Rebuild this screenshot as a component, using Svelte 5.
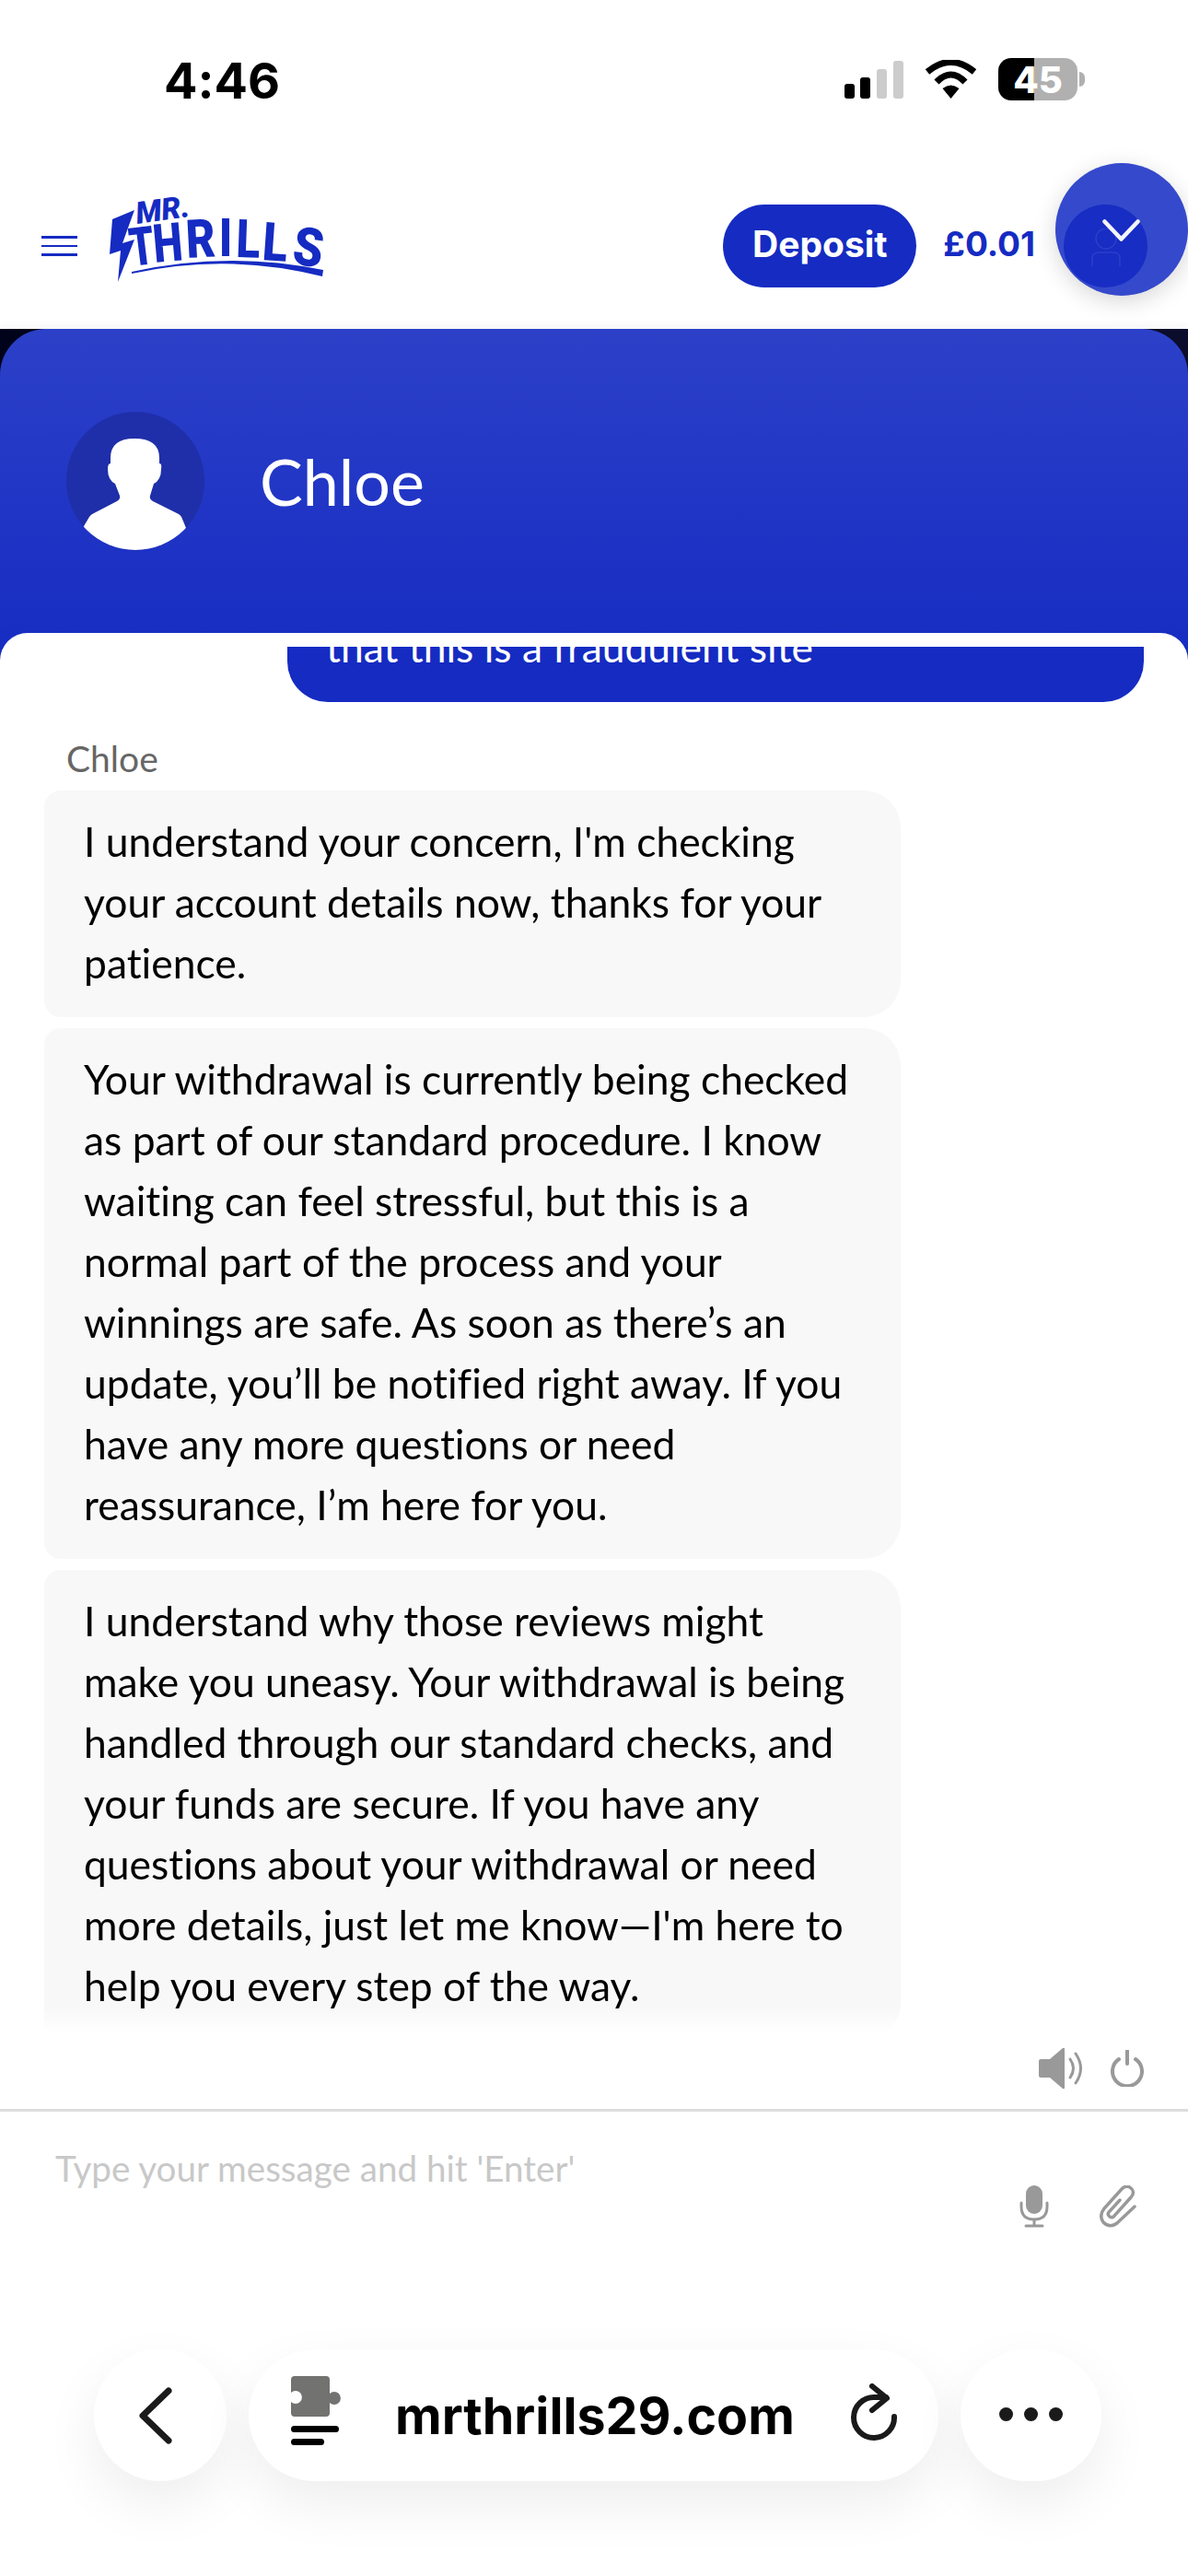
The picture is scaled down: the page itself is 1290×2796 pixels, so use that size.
<script>
  const thrills = [
    { c: 'T', x: 143, y: 289, r: -7, s: 0.74 },
    { c: 'H', x: 168, y: 285, r: -5, s: 0.78 },
    { c: 'R', x: 203, y: 280, r: -3, s: 0.84 },
    { c: 'I', x: 238, y: 278, r: 0, s: 0.8 },
    { c: 'L', x: 256, y: 279, r: 2, s: 0.82 },
    { c: 'L', x: 284, y: 282, r: 4, s: 0.86 },
    { c: 'S', x: 316, y: 286, r: 8, s: 0.9 }
  ];
  const first = [
    "I understand your concern, I'm checking",
    'your account details now, thanks for your',
    'patience.'
  ];
  const second = [
    'Your withdrawal is currently being checked',
    'as part of our standard procedure. I know',
    'waiting can feel stressful, but this is a',
    'normal part of the process and your',
    'winnings are safe. As soon as there’s an',
    'update, you’ll be notified right away. If you',
    'have any more questions or need',
    'reassurance, I’m here for you.'
  ];
  const third = [
    'I understand why those reviews might',
    'make you uneasy. Your withdrawal is being',
    'handled through our standard checks, and',
    'your funds are secure. If you have any',
    'questions about your withdrawal or need',
    "more details, just let me know—I'm here to",
    'help you every step of the way.'
  ];
</script>

<div class="page">
  <div class="status">
    <span class="time">4:46</span>
    <div class="status-icons">
      <svg class="signal" width="64" height="41" viewBox="0 0 64 41">
        <rect x="0" y="25" width="11" height="16" rx="3" fill="#000" />
        <rect x="17" y="18" width="11" height="23" rx="3" fill="#000" />
        <rect x="35" y="9" width="11" height="32" rx="3" fill="#ccc" />
        <rect x="53" y="0" width="11" height="41" rx="3" fill="#ccc" />
      </svg>
      <svg class="wifi" width="57" height="42" viewBox="0 0 57 42">
        <path d="M28.5 42 L19.5 31 Q28.5 24 37.5 31 Z" fill="#000" />
        <path d="M13 24 Q28.5 8 44 24" fill="none" stroke="#000" stroke-width="7" />
        <path d="M3 13 Q28.5 -8 54 13" fill="none" stroke="#000" stroke-width="7" />
      </svg>
      <div class="battery">
        <div class="cell"><span>45</span></div>
        <i class="tip"></i>
      </div>
    </div>
  </div>

  <header class="nav">
    <div class="burger"><i></i><i></i><i></i></div>
    <svg class="logo" width="240" height="130" viewBox="115 202 240 130">
      <path d="M146 228 L122 238 L119 276 L131 272 L128 306 L146 260 L133 264 Z" fill="#152bc2" />
      <text class="mr" transform="translate(149 243) rotate(-8)">MR.</text>
      {#each thrills as l}
        <text class="thrill" transform="translate({l.x} {l.y}) rotate({l.r}) scale({l.s} 1)">{l.c}</text>
      {/each}
      <path d="M143 295 Q247 272 351 293 L350 300 Q247 274 143 297 Z" fill="#152bc2" />
    </svg>
    <div class="spacer"></div>
    <button class="deposit"><span>Deposit</span></button>
    <span class="balance">£0.01</span>
    <div class="fab"></div>
    <div class="user-dot">
      <svg width="32" height="42" viewBox="0 0 32 42">
        <ellipse cx="16" cy="11" rx="11" ry="11" fill="none" stroke="#2b3fca" stroke-width="1.5" />
        <path d="M1 41 V33 Q1 26 8 26 H24 Q31 26 31 33 V41" fill="none" stroke="#2b3fca" stroke-width="1.5" />
      </svg>
    </div>
    <svg class="chev" width="41" height="24" viewBox="0 0 41 24">
      <path d="M2.5 2.5 L20.5 21.5 L38.5 2.5" fill="none" stroke="#f4f5fc" stroke-width="4.5" stroke-linecap="round" stroke-linejoin="round" />
    </svg>
  </header>

  <main class="widget">
    <div class="head">
      <div class="avatar">
        <svg width="150" height="150" viewBox="0 0 150 150">
          <path d="M18.5 125 L25 114 Q27 111 30 110 L55 97 Q59 95 58 91 L53 78 Q45 74 45 62 Q45 56 48 56 L48 50 Q48 29 74 29 Q101 29 101 50 L101 56 Q104 56 103 62 Q103 74 95 78 L91 91 Q90 95 94 97 L120 110 Q123 111 125 114 L130 126 L130 150 L18 150 Z" fill="#fff" />
        </svg>
      </div>
      <span class="name">Chloe</span>
    </div>
    <div class="panel">
      <div class="clip">
        <div class="out"><p>that this is a fraudulent site</p></div>
      </div>
      <div class="label">Chloe</div>
      <div class="bubbles">
        <div class="bubble">{#each first as t}<p>{t}</p>{/each}</div>
        <div class="bubble">{#each second as t}<p>{t}</p>{/each}</div>
        <div class="bubble">{#each third as t}<p>{t}</p>{/each}</div>
      </div>
      <div class="tools">
        <svg width="50" height="46" viewBox="0 0 50 46">
          <path d="M0 15 Q0 13 2 13 H12 L26 1 Q28 0 28 2 V44 Q28 46 26 45 L12 33 H2 Q0 33 0 31 Z" fill="#999" />
          <path d="M34 13 Q41 23 34 33" fill="none" stroke="#999" stroke-width="3" stroke-linecap="round" />
          <path d="M40 7 Q51 23 40 39" fill="none" stroke="#999" stroke-width="3" stroke-linecap="round" />
        </svg>
        <svg width="36" height="40" viewBox="0 0 36 40">
          <path d="M9 10 A16 16 0 1 0 27 10" fill="none" stroke="#999" stroke-width="4" stroke-linecap="round" />
          <path d="M18 1 V15" fill="none" stroke="#999" stroke-width="4" stroke-linecap="round" />
        </svg>
      </div>
      <div class="composer">
        <span class="ph">Type your message and hit 'Enter'</span>
        <div class="composer-icons">
          <svg width="32" height="46" viewBox="0 0 32 46">
            <rect x="7" y="0" width="18" height="31" rx="9" fill="#999" />
            <path d="M2 19 V23 Q2 37 16 37 Q30 37 30 23 V19" fill="none" stroke="#999" stroke-width="3" stroke-linecap="round" />
            <path d="M16 37 V44 M7 44 H25" fill="none" stroke="#999" stroke-width="3" stroke-linecap="round" />
          </svg>
          <svg width="40" height="46" viewBox="0 0 40 46">
            <path d="M22 16 L10 29 Q8 32 11 34 Q14 36 16 33 L34 13 Q39 7 34 3 Q29 -1 24 4 L5 25 Q-1 33 4 40 Q11 47 19 41 L38 23" fill="none" stroke="#999" stroke-width="3.5" stroke-linecap="round" />
          </svg>
        </div>
      </div>
    </div>
  </main>

  <footer class="browser">
    <div class="round back">
      <svg width="38" height="64" viewBox="0 0 38 64">
        <path d="M33 5 L5 32 L33 59" fill="none" stroke="#1a1a1a" stroke-width="7" stroke-linecap="round" stroke-linejoin="round" />
      </svg>
    </div>
    <div class="url">
      <svg class="ext" width="54" height="75" viewBox="0 0 54 75">
        <path d="M4 0 H38 Q42 0 42 4 V19 A7 7 0 1 1 42 29 V40 Q42 44 38 44 H4 Q0 44 0 40 V28 A7 7 0 1 0 0 18 V4 Q0 0 4 0 Z" fill="#727270" />
        <rect x="0" y="54" width="52" height="7" rx="3.5" fill="#000" />
        <rect x="0" y="68" width="36" height="7" rx="3.5" fill="#000" />
      </svg>
      <span class="host">mrthrills29.com</span>
      <svg class="reload" width="52" height="62" viewBox="0 0 52 62">
        <path d="M47 36 A22 22 0 1 1 26 15 L38 15" fill="none" stroke="#1a1a1a" stroke-width="6" stroke-linecap="round" />
        <path d="M23 3 L39 16 L23 29" fill="none" stroke="#1a1a1a" stroke-width="6" stroke-linecap="round" stroke-linejoin="round" />
      </svg>
    </div>
    <div class="round more">
      <div class="dots"><i></i><i></i><i></i></div>
    </div>
  </footer>
</div>

<style>
  :global(body) {
    margin: 0;
    background: #fff;
  }
  .page {
    position: relative;
    width: 1290px;
    height: 2796px;
    overflow: hidden;
    background: #fff;
    display: flex;
    flex-direction: column;
    font-family: 'Lato', sans-serif;
    font-variant-ligatures: none;
  }
  .status {
    height: 177px;
    flex: none;
    display: flex;
    align-items: flex-start;
    justify-content: space-between;
    box-sizing: border-box;
    padding: 56px 112px 0 178px;
  }
  .time {
    font-family: 'Inter', 'Liberation Sans', sans-serif;
    font-weight: 700;
    font-size: 54px;
    line-height: 64px;
    color: #000;
  }
  .status-icons {
    display: flex;
    align-items: flex-start;
    gap: 23px;
    padding-top: 7px;
  }
  .signal {
    margin-top: 3px;
  }
  .wifi {
    margin-top: 2px;
  }
  .battery {
    display: flex;
    align-items: center;
  }
  .cell {
    width: 86px;
    height: 46px;
    border-radius: 14px;
    background: linear-gradient(90deg, #000 45%, #b0b0b0 45%);
    display: flex;
    align-items: center;
    justify-content: center;
    color: #fff;
    font-family: 'Inter', 'Liberation Sans', sans-serif;
    font-weight: 800;
    font-size: 40px;
  }
  .tip {
    width: 6px;
    height: 16px;
    margin-left: 2px;
    border-radius: 0 6px 6px 0;
    background: #b0b0b0;
  }
  .nav {
    position: relative;
    height: 180px;
    flex: none;
    display: flex;
    align-items: center;
    box-sizing: border-box;
    padding-left: 45px;
  }
  .burger {
    display: flex;
    flex-direction: column;
    gap: 7px;
    width: 39px;
  }
  .burger i {
    display: block;
    height: 2.5px;
    background: #152bc2;
  }
  .logo {
    margin-left: 31px;
    flex: none;
  }
  .mr {
    font-family: 'Roboto', sans-serif;
    font-weight: 900;
    font-style: italic;
    font-size: 33px;
    fill: #152bc2;
  }
  .thrill {
    font-family: 'Roboto', sans-serif;
    font-weight: 900;
    font-size: 58px;
    fill: #152bc2;
  }
  .spacer {
    flex: 1;
  }
  .deposit {
    width: 210px;
    height: 90px;
    border: 0;
    padding: 0 0 6px;
    border-radius: 45px;
    background: #152bc2;
    color: #fff;
    font-family: 'Inter', sans-serif;
    font-weight: 700;
    font-size: 39px;
  }
  .balance {
    margin: 0 166px 6px 29px;
    color: #152bc2;
    font-family: 'Inter', sans-serif;
    font-weight: 700;
    font-size: 37px;
  }
  .fab {
    position: absolute;
    left: 1146px;
    top: 0;
    width: 144px;
    height: 144px;
    border-radius: 50%;
    background: #3549cc;
    box-shadow: 0 6px 24px rgba(0, 0, 0, 0.16);
  }
  .user-dot {
    position: absolute;
    left: 1155px;
    top: 45px;
    width: 91px;
    height: 90px;
    border-radius: 50%;
    background: #172dc3;
    display: flex;
    justify-content: center;
    box-sizing: border-box;
    padding-top: 26px;
  }
  .chev {
    position: absolute;
    left: 1197px;
    top: 61px;
  }
  .widget {
    flex: 1;
    display: flex;
    flex-direction: column;
    background: linear-gradient(90deg, #00031a, #0c0c2c) no-repeat;
    background-size: 100% 100px;
    box-shadow: 0 -4px 8px rgba(0, 0, 0, 0.04);
    min-height: 0;
  }
  .head {
    height: 380px;
    flex: none;
    box-sizing: border-box;
    padding: 90px 72px 0;
    display: flex;
    align-items: flex-start;
    gap: 60px;
    border-radius: 50px 50px 0 0;
    background: linear-gradient(180deg, #2c40c8, #152bc2);
  }
  .avatar {
    width: 150px;
    height: 150px;
    flex: none;
    border-radius: 50%;
    overflow: hidden;
    background: #1f2fa9;
  }
  .avatar svg {
    display: block;
  }
  .name {
    color: #fff;
    font-size: 70px;
    line-height: 150px;
  }
  .panel {
    flex: 1;
    margin-top: -50px;
    position: relative;
    border-radius: 30px 30px 0 0;
    background: #fff;
    display: flex;
    flex-direction: column;
    min-height: 0;
  }
  .clip {
    height: 60px;
    margin-top: 15px;
    padding: 0 48px 0 312px;
    flex: none;
  }
  .out {
    height: 60px;
    overflow: hidden;
    box-sizing: border-box;
    padding-left: 42px;
    border-radius: 0 0 44px 44px;
    background: #152bc2;
  }
  .out p {
    margin: -33px 0 0;
    color: #fff;
    font-size: 44.4px;
    line-height: 66px;
  }
  .label {
    margin: 36px 0 0 72px;
    font-size: 39px;
    line-height: 50px;
    color: #666;
    flex: none;
  }
  .bubbles {
    display: flex;
    flex-direction: column;
    gap: 12px;
    margin: 10px 0 0 48px;
    width: 930px;
    height: 1349px;
    flex: none;
    overflow: hidden;
    -webkit-mask-image: linear-gradient(180deg, #000 calc(100% - 28px), transparent);
    mask-image: linear-gradient(180deg, #000 calc(100% - 28px), transparent);
  }
  .bubble {
    background: #f8f8f8;
    border-radius: 18px 40px 40px 18px;
    padding: 22px 0 26px 43px;
    flex: none;
  }
  .bubble p {
    margin: 0;
    font-size: 44.4px;
    line-height: 66px;
    color: #000;
    white-space: nowrap;
  }
  .tools {
    display: flex;
    justify-content: flex-end;
    align-items: center;
    gap: 28px;
    height: 85px;
    padding: 0 48px 6px 0;
    border-bottom: 3px solid #ddd;
    flex: none;
    box-sizing: border-box;
  }
  .composer {
    position: relative;
    padding: 36px 0 0 60px;
    flex: none;
  }
  .ph {
    font-size: 38.6px;
    line-height: 50px;
    color: #c8c8c8;
  }
  .composer-icons {
    position: absolute;
    top: 80px;
    right: 56px;
    display: flex;
    gap: 55px;
  }
  .browser {
    position: absolute;
    left: 102px;
    top: 2550px;
    width: 1094px;
    display: flex;
    gap: 24px;
  }
  .round,
  .url {
    height: 143px;
    background: #fff;
    border-radius: 72px;
    box-shadow: 0 24px 60px rgba(0, 0, 0, 0.07);
    display: flex;
    align-items: center;
  }
  .round {
    width: 144px;
    flex: none;
    justify-content: center;
  }
  .round.more {
    width: 153px;
    padding-bottom: 2px;
    box-sizing: border-box;
  }
  .back svg {
    margin: 0 10px 0 0;
  }
  .url {
    flex: 1;
    min-width: 0;
    box-sizing: border-box;
    padding: 0 43px 0 46px;
  }
  .ext {
    flex: none;
    margin-bottom: 10px;
  }
  .host {
    flex: 1;
    margin-left: 59px;
    font-family: 'Inter', 'Liberation Sans', sans-serif;
    font-weight: 700;
    font-size: 55.5px;
    color: #000;
    white-space: nowrap;
  }
  .reload {
    flex: none;
    margin-bottom: 8px;
  }
  .dots {
    display: flex;
    gap: 12px;
  }
  .dots i {
    width: 15px;
    height: 15px;
    border-radius: 50%;
    background: #1a1a1a;
  }
</style>
